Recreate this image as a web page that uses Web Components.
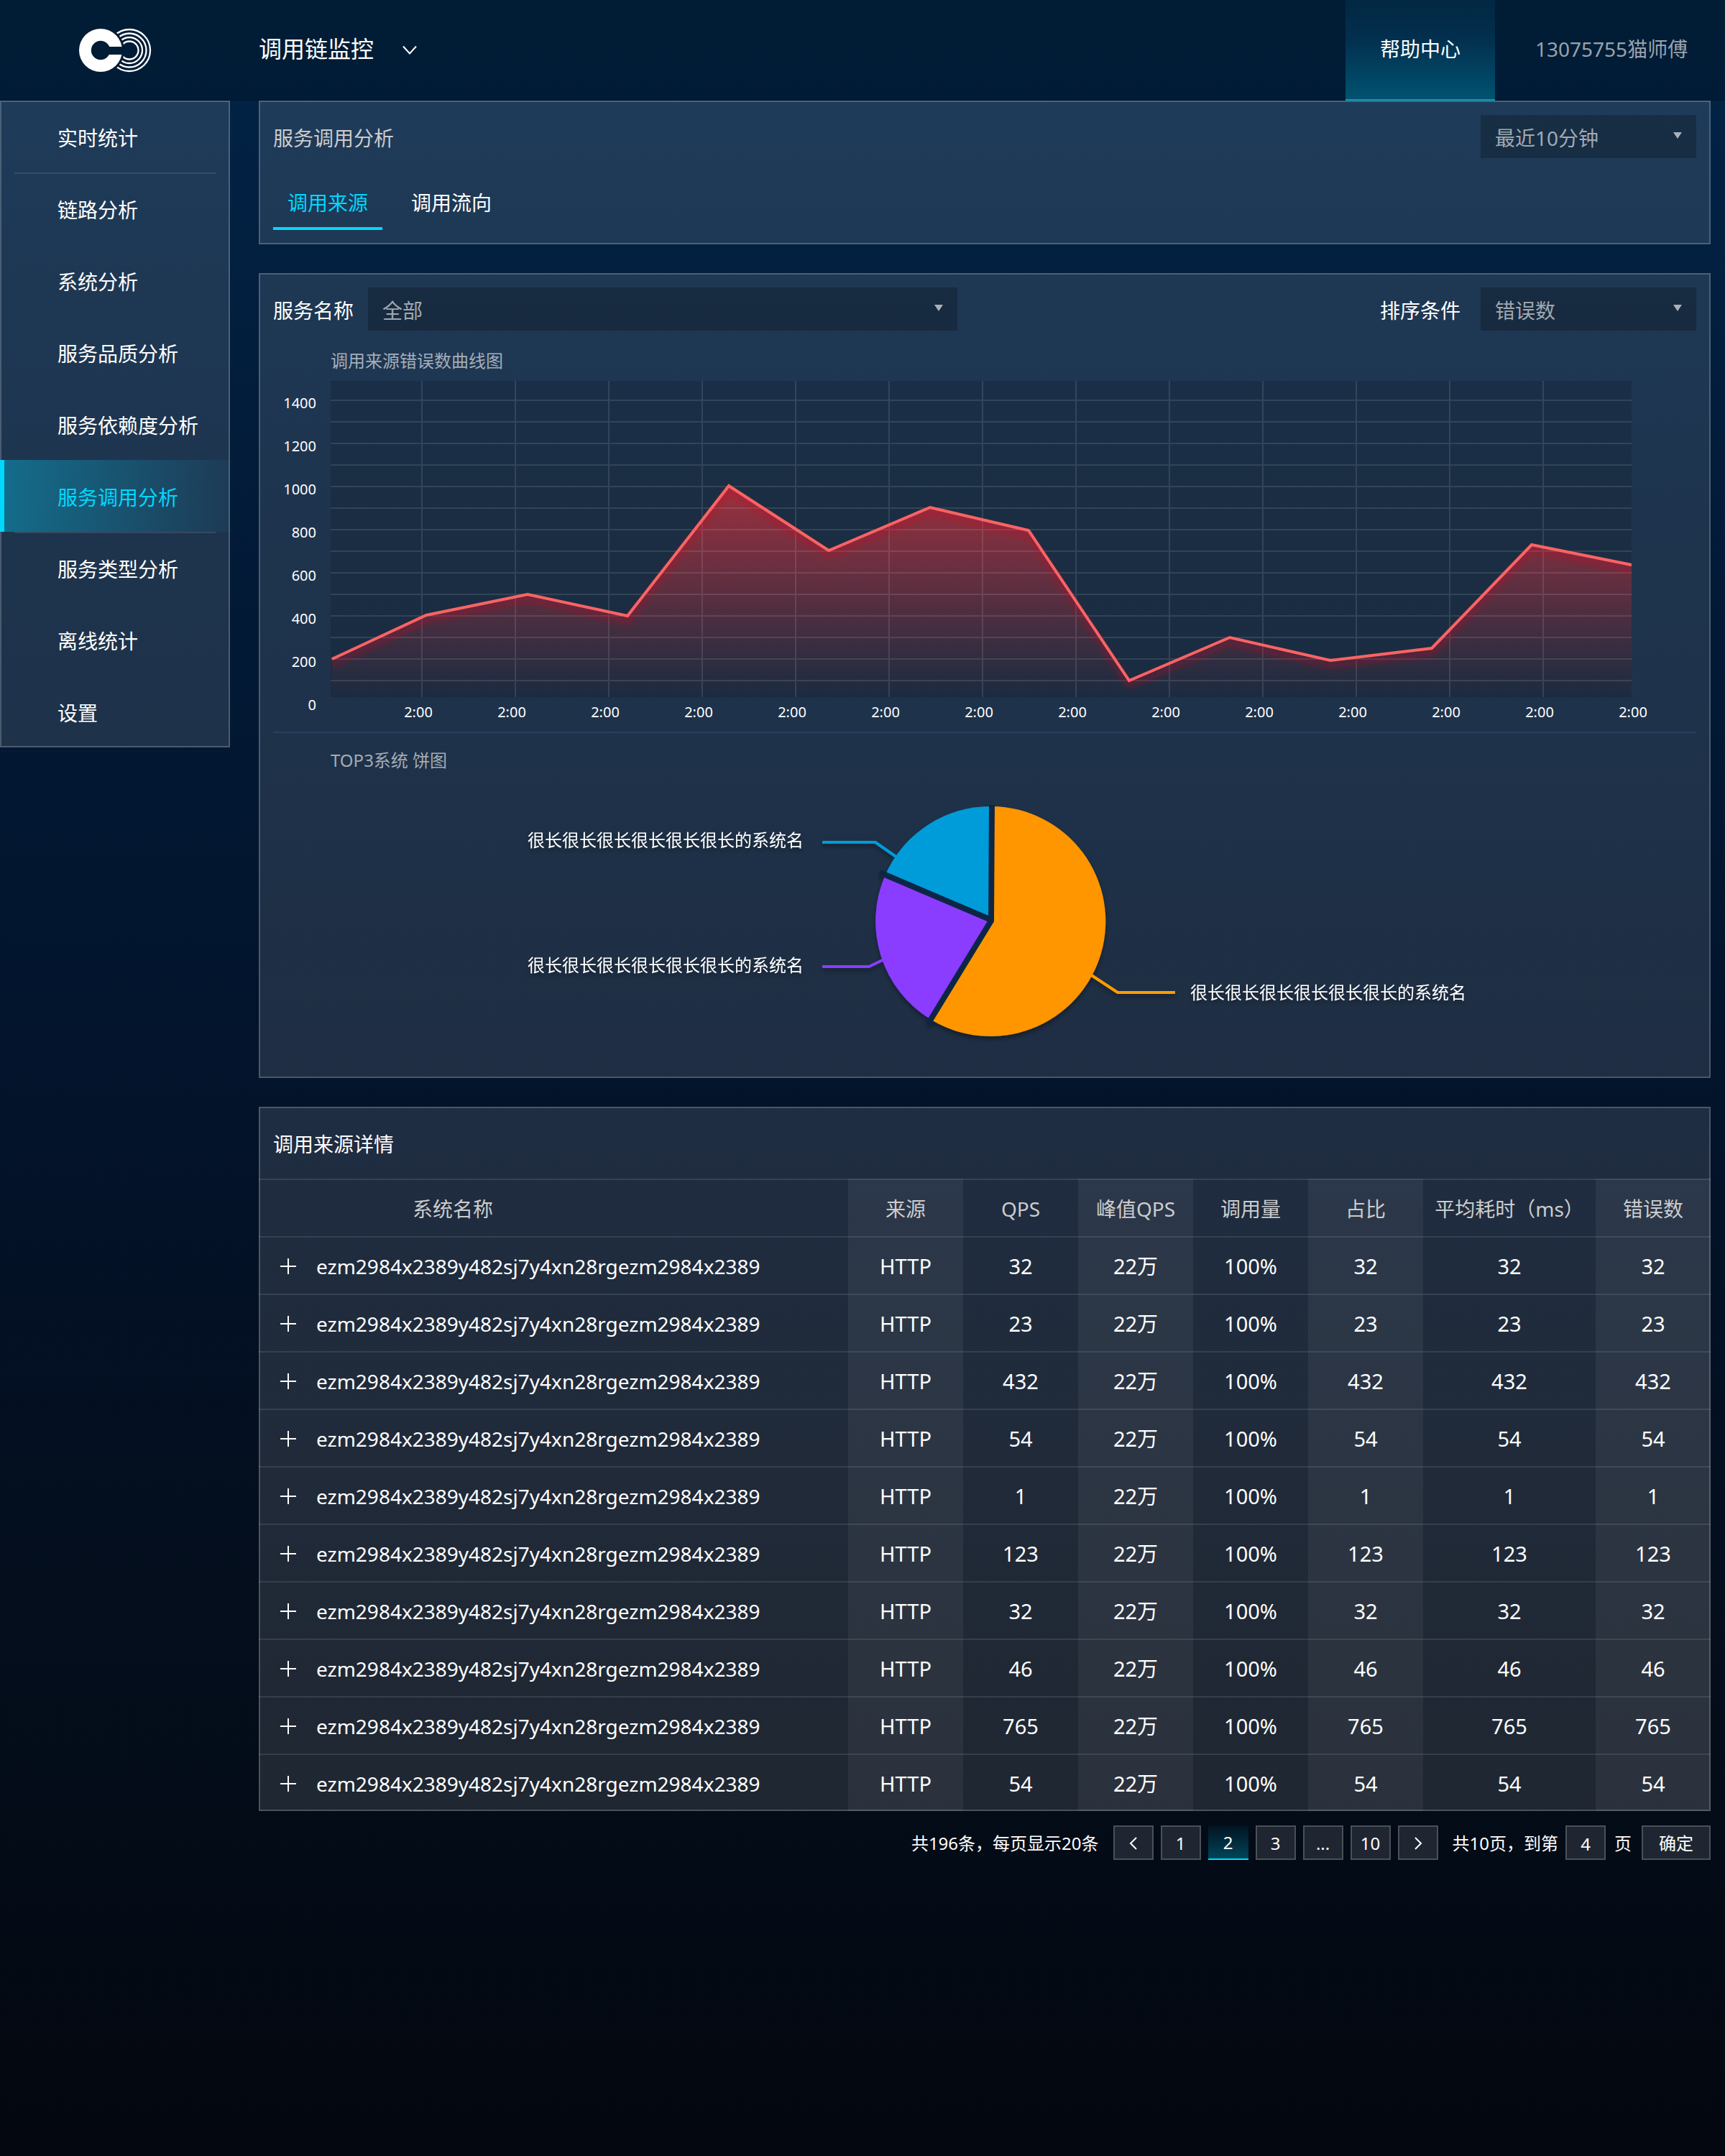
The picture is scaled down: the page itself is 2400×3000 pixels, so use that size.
<!DOCTYPE html>
<html lang="zh-CN">
<head>
<meta charset="utf-8">
<meta name="viewport" content="width=device-width, initial-scale=1">
<title>调用链监控</title>
<style>
  :root {
    --accent: #00d8ff;
    --muted: #cccccc;
    --panel: rgba(255, 255, 255, .115);
    --edge: rgba(255, 255, 255, .2);
    --rule: rgba(255, 255, 255, .1);
  }
  html { background: #04070f; }
  body {
    margin: 0;
    min-height: 100vh;
    color: #fff;
    font: 28px/40px "Noto Sans", "Noto Sans CJK SC", sans-serif;
    background: linear-gradient(#022543 0, #022244 5%, #021b38 24%, #021630 40%, #03132a 52%, #040f20 68%, #030c18 83%, #04070f 100%);
  }
  .layout { display: flex; align-items: flex-start; gap: 40px; padding-right: 20px; }
  main { flex: 1; min-width: 0; display: flex; flex-direction: column; gap: 40px; }
  .stack { display: flex; flex-direction: column; gap: 20px; }
</style>
</head>
<body>
<app-header></app-header>
<div class="layout">
  <side-nav>
    <side-nav-item>实时统计</side-nav-item>
    <side-nav-item ruled>链路分析</side-nav-item>
    <side-nav-item>系统分析</side-nav-item>
    <side-nav-item>服务品质分析</side-nav-item>
    <side-nav-item>服务依赖度分析</side-nav-item>
    <side-nav-item current>服务调用分析</side-nav-item>
    <side-nav-item ruled>服务类型分析</side-nav-item>
    <side-nav-item>离线统计</side-nav-item>
    <side-nav-item>设置</side-nav-item>
  </side-nav>
  <main>
    <content-panel>
      <tool-row>
        <panel-title muted>服务调用分析</panel-title>
        <select-field slot="end" name="时间范围" value="最近10分钟"></select-field>
      </tool-row>
      <tab-bar></tab-bar>
    </content-panel>
    <content-panel>
      <tool-row>
        <select-field label="服务名称" value="全部" wide></select-field>
        <select-field slot="end" label="排序条件" value="错误数"></select-field>
      </tool-row>
      <line-chart></line-chart>
      <pie-chart></pie-chart>
    </content-panel>
    <div class="stack">
      <content-panel>
        <detail-table></detail-table>
      </content-panel>
      <page-nav></page-nav>
    </div>
  </main>
</div>

<script>
const define = (name, html, setup) => {
  const template = document.createElement('template');
  template.innerHTML = '<style>*{box-sizing:border-box}</style>' + html;
  customElements.define(name, class extends HTMLElement {
    connectedCallback() {
      if (this.shadowRoot) return;
      const root = this.attachShadow({ mode: 'open' });
      root.append(template.content.cloneNode(true));
      if (setup) setup(this, root);
    }
  });
};

define('app-header', `
<style>
  :host { display: block; }
  header { display: flex; height: 140px; background: rgba(0, 0, 0, .2); border-bottom: 2px solid rgba(0, 0, 0, .1); }
  .logo { flex: none; width: 320px; padding: 38px 0 0 108px; }
  svg { display: block; }
  .product { display: flex; align-items: center; gap: 40px; margin-left: 40px; padding: 0 0 2px; border: 0;
    background: none; color: inherit; font: inherit; font-size: 32px; }
  .product svg { margin-top: 4px; }
  .help { display: flex; align-items: center; justify-content: center; width: 208px; margin: 0 0 -2px auto; padding-bottom: 2px;
    color: #fff; text-decoration: none; border-bottom: 2px solid #009ebf;
    background: linear-gradient(#022742, #02304e 40%, #005371); }
  .user { display: flex; align-items: center; min-width: 320px; padding: 0 40px 2px 56px; color: rgba(255, 255, 255, .6); }
</style>
<header>
  <div class="logo">
    <svg width="104" height="64" viewBox="0 0 104 64" role="img" aria-label="logo">
      <defs>
        <mask id="clear"><rect width="104" height="64" fill="#fff"/><circle cx="32" cy="32" r="33" fill="#000"/></mask>
        <mask id="slot"><rect width="104" height="64" fill="#fff"/><circle cx="32" cy="32" r="13.2" fill="#000"/><rect x="32" y="27" width="40" height="11" fill="#000"/></mask>
      </defs>
      <circle cx="32" cy="32" r="30" fill="#fff" mask="url(#slot)"/>
      <g fill="none" stroke="#fff" stroke-width="2.3" mask="url(#clear)">
        <circle cx="72" cy="32" r="29"/><circle cx="72" cy="32" r="23.5"/><circle cx="72" cy="32" r="18"/><circle cx="72" cy="32" r="12.5"/>
      </g>
    </svg>
  </div>
  <button class="product" type="button">调用链监控
    <svg width="20" height="14" viewBox="0 0 20 14" fill="none" stroke="#fff" stroke-width="2"><path d="M1 1.500 10 11.500 19 1.500"/></svg>
  </button>
  <a class="help" href="#help">帮助中心</a>
  <span class="user">13075755猫师傅</span>
</header>`);

define('side-nav', `
<style>
  :host { display: block; flex: none; width: 320px; background: var(--panel);
    outline: 2px solid var(--edge); outline-offset: -2px; }
</style>
<nav><slot></slot></nav>`);

define('side-nav-item', `
<style>
  :host { display: block; position: relative; }
  a { display: flex; align-items: center; height: 100px; padding: 4px 0 0 80px; color: #fff; text-decoration: none; }
  :host([ruled])::before { content: ""; position: absolute; top: 0; left: 20px; right: 20px; height: 2px; background: var(--rule); }
  :host([current]) { z-index: 1; }
  :host([current]) a { padding-left: 74px; border-left: 6px solid var(--accent); color: var(--accent);
    background: linear-gradient(90deg, rgba(0, 216, 255, .34), rgba(0, 216, 255, .04)); }
</style>
<a href="#"><slot></slot></a>`);

define('content-panel', `
<style>
  :host { display: block; background: var(--panel); outline: 2px solid var(--edge); outline-offset: -2px; }
</style>
<section><slot></slot></section>`);

define('tool-row', `
<style>
  :host { display: flex; align-items: center; justify-content: space-between; gap: 40px; padding: 20px; }
  .start { flex: 1; min-width: 0; }
</style>
<div class="start"><slot></slot></div>
<slot name="end"></slot>`);

define('panel-title', `
<style>
  :host { display: block; }
  h2 { margin: 0; padding-top: 4px; font: inherit; }
  :host([muted]) h2 { color: var(--muted); }
</style>
<h2><slot></slot></h2>`);

define('select-field', `
<style>
  :host { display: flex; align-items: center; gap: 20px; }
  label { flex: none; padding-top: 4px; }
  label:empty { display: none; }
  .box { position: relative; width: 300px; }
  :host([label]) .box { margin-left: 8px; }
  :host([wide]) .box { flex: 0 1 820px; margin-left: 0; }
  select { display: block; width: 100%; height: 60px; padding: 4px 60px 0 20px; border: 0; border-radius: 0; appearance: none;
    background: rgba(0, 0, 0, .22); color: rgba(255, 255, 255, .6); font: inherit; }
  option { color: #000; }
  .arrow { position: absolute; top: 24px; right: 20px; pointer-events: none; }
</style>
<label for="field"></label>
<div class="box">
  <select id="field"></select>
  <svg class="arrow" width="12" height="9" viewBox="0 0 12 9"><path d="M0 0H12L6 9Z" fill="#a9b1ba"/></svg>
</div>`, (host, root) => {
  const select = root.querySelector('select');
  root.querySelector('label').textContent = host.getAttribute('label') || '';
  if (host.hasAttribute('name')) select.setAttribute('aria-label', host.getAttribute('name'));
  select.append(new Option(host.getAttribute('value')));
});

define('tab-bar', `
<style>
  :host { display: block; padding: 0 20px 20px; }
  div { display: flex; gap: 20px; }
  button { height: 80px; padding: 8px 20px 0; border: 0; border-bottom: 4px solid transparent; background: none; color: #fff; font: inherit; }
  button[aria-selected="true"] { color: var(--accent); border-color: var(--accent); }
</style>
<div role="tablist">
  <button type="button" role="tab" aria-selected="true">调用来源</button>
  <button type="button" role="tab" aria-selected="false">调用流向</button>
</div>`);

const chartHeading = `
  h3 { margin: 0 100px; font: inherit; font-size: 24px; line-height: 44px; color: rgba(255, 255, 255, .6); }
  svg { display: block; width: 100%; height: auto; }`;

define('line-chart', `
<style>
  :host { display: block; }
  ${chartHeading}
  text { fill: #fff; font-size: 20px; }
  hr { height: 2px; margin: 8px 20px 0; border: 0; background: #27415f; }
</style>
<h3>调用来源错误数曲线图</h3>
<svg viewBox="0 0 2020 486">
  <defs>
    <linearGradient id="fade" gradientUnits="userSpaceOnUse" x1="0" y1="152" x2="0" y2="446">
      <stop offset="0" stop-color="#e0323c" stop-opacity=".66"/>
      <stop offset="1" stop-color="#e0323c" stop-opacity="0"/>
    </linearGradient>
    <filter id="glow" filterUnits="userSpaceOnUse" x="100" y="0" width="1810" height="446">
      <feDropShadow dx="0" dy="7" stdDeviation="4" flood-color="#d0101c" flood-opacity=".6"/>
    </filter>
  </defs>
  <rect x="100" y="6" width="1810" height="440" fill="#000" fill-opacity=".13"/>
  <path class="area" fill="url(#fade)"/>
  <path class="grid" fill="none" stroke="#fff" stroke-opacity=".11" stroke-width="2"/>
  <path class="line" fill="none" stroke="#ff6464" stroke-width="4" filter="url(#glow)"/>
  <g class="y" text-anchor="end"></g>
  <g class="x" text-anchor="middle"></g>
</svg>
<hr>`, (host, root) => {
  const y = value => 453 - value * .3;
  const data = [[102, 200], [233, 403], [374, 500], [513, 400], [654, 1003], [793, 703], [934, 903], [1071, 797],
    [1211, 100], [1351, 300], [1491, 193], [1632, 250], [1771, 730], [1910, 637]];
  const line = 'M' + data.map(([px, value]) => `${px} ${Math.round(y(value))}`).join('L');
  root.querySelector('.line').setAttribute('d', line);
  root.querySelector('.area').setAttribute('d', line + 'V446H102Z');
  let grid = '';
  for (let value = 100; value <= 1400; value += 100) grid += `M100 ${y(value)}H1910`;
  for (let px = 227; px < 1910; px += 130) grid += `M${px} 6V446`;
  root.querySelector('.grid').setAttribute('d', grid);
  let labels = '';
  for (let value = 0; value <= 1400; value += 200) labels += `<text x="80" y="${y(value) + 11}">${value}</text>`;
  root.querySelector('.y').innerHTML = labels;
  labels = '';
  for (let i = 0; i < 14; i++) labels += `<text x="${222 + i * 130}" y="474">2:00</text>`;
  root.querySelector('.x').innerHTML = labels;
});

define('pie-chart', `
<style>
  :host { display: block; padding-top: 16px; }
  ${chartHeading}
  text { fill: #fff; font-size: 24px; }
</style>
<h3>TOP3系统 饼图</h3>
<svg viewBox="0 0 2020 420">
  <defs>
    <filter id="drop" x="-10%" y="-20%" width="120%" height="150%">
      <feDropShadow dx="0" dy="4" stdDeviation="3" flood-color="#000" flood-opacity=".35"/>
    </filter>
  </defs>
  <g filter="url(#drop)">
    <g fill="none" stroke-width="4">
      <path stroke="#009cd9" d="M784 92H858L888 113"/>
      <path stroke="#8a3cff" d="M784 265H849L870 255"/>
      <path stroke="#ff9c00" d="M1157 276L1195 301H1275"/>
    </g>
    <path fill="#ff9600" d="M1019 202L1020 42A160 160 0 1 1 934 338Z"/>
    <path fill="#8a3cff" d="M1019 202L934 338A160 160 0 0 1 871 139Z"/>
    <path fill="#009cd9" d="M1019 202L871 139A160 160 0 0 1 1020 42Z"/>
    <path fill="none" stroke="#102844" stroke-width="8" d="M1019 200L864 134M1020 40L1019 201L931 345"/>
  </g>
  <g filter="url(#drop)">
    <text x="374" y="98">很长很长很长很长很长很长的系统名</text>
    <text x="374" y="272">很长很长很长很长很长很长的系统名</text>
    <text x="1296" y="310">很长很长很长很长很长很长的系统名</text>
  </g>
</svg>`);

define('detail-table', `
<style>
  :host { display: block; }
  h2 { margin: 0; height: 100px; padding: 32px 20px 0; font: inherit; }
  table { width: 100%; table-layout: fixed; border-collapse: separate; border-spacing: 0; }
  th, td { height: 80px; padding: 2px 0 0; border-top: 2px solid var(--rule); text-align: center; font-weight: 400; white-space: nowrap; }
  th { color: var(--muted); }
  td { font-size: 29px; }
  td:first-child { font-size: 28px; }
  th:nth-child(even), td:nth-child(even) { background: rgba(255, 255, 255, .055); }
  col { width: 160px; }
  col.name { width: auto; }
  col.time { width: 240px; }
  th:first-child { padding-left: 214px; text-align: left; }
  .name-cell { display: flex; align-items: center; gap: 28px; padding-left: 30px; }
  button { display: block; width: 22px; height: 22px; padding: 0; border: 0; background: none; }
  svg { display: block; }
</style>
<h2>调用来源详情</h2>
<table>
  <colgroup><col class="name"><col><col><col><col><col><col class="time"><col></colgroup>
  <thead><tr><th>系统名称</th><th>来源</th><th>QPS</th><th>峰值QPS</th><th>调用量</th><th>占比</th><th>平均耗时（ms）</th><th>错误数</th></tr></thead>
  <tbody></tbody>
</table>`, (host, root) => {
  root.querySelector('tbody').innerHTML = [32, 23, 432, 54, 1, 123, 32, 46, 765, 54].map(n => `
    <tr><td><div class="name-cell"><button type="button" aria-label="展开"><svg width="22" height="22" viewBox="0 0 22 22"><path d="M11 0V22M0 11H22" stroke="#fff" stroke-width="2"/></svg></button><span>ezm2984x2389y482sj7y4xn28rgezm2984x2389</span></div></td>
    <td>HTTP</td><td>${n}</td><td>22万</td><td>100%</td><td>${n}</td><td>${n}</td><td>${n}</td></tr>`).join('');
});

define('page-nav', `
<style>
  :host { display: block; font-size: 24px; }
  nav, .pages { display: flex; align-items: center; }
  nav { justify-content: flex-end; }
  .pages { gap: 10px; margin: 0 20px; }
  button, input { display: flex; align-items: center; justify-content: center; width: 56px; height: 48px; padding: 2px 0 0;
    border: 2px solid #495058; border-radius: 0; background: #1f2632; color: #fff; font: inherit; line-height: 40px; text-align: center; }
  button[aria-current] { border-width: 0 0 2px; border-color: var(--accent); background: linear-gradient(#021322, #004558); }
  span, label { padding-top: 2px; }
  input { margin: 0 12px 0 10px; }
  .go { width: 96px; margin-left: 14px; }
</style>
<nav aria-label="分页">
  <span>共196条，每页显示20条</span>
  <div class="pages">
    <button type="button" aria-label="上一页"><svg width="12" height="18" viewBox="0 0 12 18" fill="none" stroke="#fff" stroke-width="2"><path d="M10 1 2 9 10 17"/></svg></button>
    <button type="button">1</button>
    <button type="button" aria-current="page">2</button>
    <button type="button">3</button>
    <button type="button">...</button>
    <button type="button">10</button>
    <button type="button" aria-label="下一页"><svg width="12" height="18" viewBox="0 0 12 18" fill="none" stroke="#fff" stroke-width="2"><path d="M2 1 10 9 2 17"/></svg></button>
  </div>
  <label for="page">共10页，到第</label>
  <input id="page" value="4">
  <span>页</span>
  <button class="go" type="button">确定</button>
</nav>`);
</script>
</body>
</html>
